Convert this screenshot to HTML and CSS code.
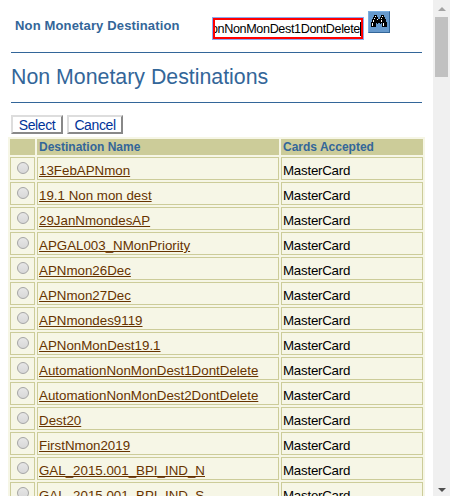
FILE: index.html
```
<!DOCTYPE html>
<html lang="en">
<head>
<meta charset="utf-8">
<title>Non Monetary Destinations</title>
<link rel="stylesheet" href="styles.css">
</head>
<body>
<div class="window">
<main class="content">
  <div class="search">
    <label class="label"><span>Non Monetary Destination</span></label>
    <div class="field"><span class="value">onNonMonDest1DontDelete</span></div>
    <button class="find" aria-label="Search">
      <svg width="20" height="20" viewBox="0 0 20 20" shape-rendering="crispEdges">
        <path fill="#000" d="M5 3h3v2h1v2h2V5h1V3h3v2h1v2h1v3h1v5h-5v-4h-1v1h-1v-1H9v1H8v-1H7v4H2v-5h1V7h1V5h1z"/>
        <path fill="#fff" d="M6 4h1v1H6zM5 6h1v1H5zM4 8h1v2H4zM3 11h1v3H3zM13 4h1v1h-1zM12 6h1v1h-1zM12 8h1v2h-1zM14 11h1v3h-1zM8 7h1v1H8z"/>
      </svg>
    </button>
  </div>
  <h1 class="title"><span>Non Monetary Destinations</span></h1>
  <div class="actions"><button class="btn select">Select</button><button class="btn cancel">Cancel</button></div>
  <table class="grid">
    <colgroup><col class="c1"><col class="c2"><col class="c3"></colgroup>
    <thead><tr><th></th><th>Destination Name</th><th>Cards Accepted</th></tr></thead>
    <tbody>
      <tr><td><i class="radio"></i></td><td><a>13FebAPNmon</a></td><td>MasterCard</td></tr>
      <tr><td><i class="radio"></i></td><td><a>19.1 Non mon dest</a></td><td>MasterCard</td></tr>
      <tr><td><i class="radio"></i></td><td><a>29JanNmondesAP</a></td><td>MasterCard</td></tr>
      <tr><td><i class="radio"></i></td><td><a>APGAL003_NMonPriority</a></td><td>MasterCard</td></tr>
      <tr><td><i class="radio"></i></td><td><a>APNmon26Dec</a></td><td>MasterCard</td></tr>
      <tr><td><i class="radio"></i></td><td><a>APNmon27Dec</a></td><td>MasterCard</td></tr>
      <tr><td><i class="radio"></i></td><td><a>APNmondes9119</a></td><td>MasterCard</td></tr>
      <tr><td><i class="radio"></i></td><td><a>APNonMonDest19.1</a></td><td>MasterCard</td></tr>
      <tr><td><i class="radio"></i></td><td><a>AutomationNonMonDest1DontDelete</a></td><td>MasterCard</td></tr>
      <tr><td><i class="radio"></i></td><td><a>AutomationNonMonDest2DontDelete</a></td><td>MasterCard</td></tr>
      <tr><td><i class="radio"></i></td><td><a>Dest20</a></td><td>MasterCard</td></tr>
      <tr><td><i class="radio"></i></td><td><a>FirstNmon2019</a></td><td>MasterCard</td></tr>
      <tr><td><i class="radio"></i></td><td><a>GAL_2015.001_BPI_IND_N</a></td><td>MasterCard</td></tr>
      <tr><td><i class="radio"></i></td><td><a>GAL_2015.001_BPI_IND_S</a></td><td>MasterCard</td></tr>
    </tbody>
  </table>
</main>
<aside class="scrollbar"><i class="up"></i><i class="thumb"></i><i class="down"></i></aside>
</div>
</body>
</html>
```
FILE: styles.css
```
* { box-sizing: border-box; }
body { margin: 0; background: #fff; font-family: "Liberation Sans", Arial, sans-serif; font-size: 13px; color: #000; }
.window { display: flex; width: 450px; height: 496px; overflow: hidden; }
.content { width: 433px; height: 496px; overflow: hidden; }
.search { display: flex; align-items: flex-start; height: 53px; margin: 0 11px; border-bottom: 1px solid #369; }
.label { width: 202px; padding: 18px 0 0 4px; font-size: 13px; line-height: 15px; font-weight: bold; color: #369; letter-spacing: .15px; white-space: nowrap; }
.field { display: flex; justify-content: flex-end; width: 150px; height: 21px; margin: 18px 5px 0 0; border: 2px solid #f00; box-shadow: 0 0 0 1px #8aa8ef; overflow: hidden; background: #fff; }
.value { flex: none; height: 14px; margin: 2px 0 0 0; border-right: 1px solid #000; font-size: 12.6px; line-height: 15px; letter-spacing: -.37px; }
.find { width: 22px; height: 22px; margin-top: 11px; padding: 0; border: 1px solid; border-color: #7aaee0 #369 #369 #7aaee0; background: #69c; }
.find svg { display: block; }
.title { height: 50px; margin: 0 11px; border-bottom: 1px solid #369; font-size: 21.33px; font-weight: normal; line-height: 24px; padding-top: 12px; color: #369; white-space: nowrap; }
.actions { display: flex; gap: 4px; padding: 12px 0 3px 11px; }
.btn { height: 19px; padding: 0; background: #fff; border: 2px solid; border-color: #ddd #888 #888 #ddd; color: #039; font: 14px/14px "Liberation Sans", Arial, sans-serif; letter-spacing: -.4px; }
.select { width: 52px; }
.cancel { width: 56px; }
.grid { width: 417px; margin-left: 8px; table-layout: fixed; border-spacing: 2px; background: #f6f6e6; }
.c1 { width: 25px; }
.c2 { width: 242px; }
.c3 { width: 142px; }
th { height: 16px; padding: 0 0 0 2px; background: #cc9; color: #369; text-align: left; font-size: 12px; line-height: 16px; }
td { height: 23px; padding: 4px 0 0 1px; border: 1px solid #cc9; font-size: 13.33px; line-height: 17px; white-space: nowrap; vertical-align: top; }
td:first-child { padding: 4px 0 0 6px; }
td:last-child { letter-spacing: -.25px; }
a { color: #630; text-decoration: underline; }
.radio { display: block; width: 12px; height: 12px; border: 1px solid #a5a5a5; border-radius: 50%; background: linear-gradient(#e6e6e6, #d8d8d8); }
.scrollbar { display: flex; flex-direction: column; align-items: center; width: 17px; background: #f0f0f0; }
.up, .down { width: 0; height: 0; border: 4px solid transparent; }
.up { margin-top: 3px; border-bottom-color: #a3a3a3; }
.thumb { width: 13px; height: 60px; margin-top: 6px; background: #c1c1c1; }
.down { margin-top: auto; border-top-color: #505050; }
```
